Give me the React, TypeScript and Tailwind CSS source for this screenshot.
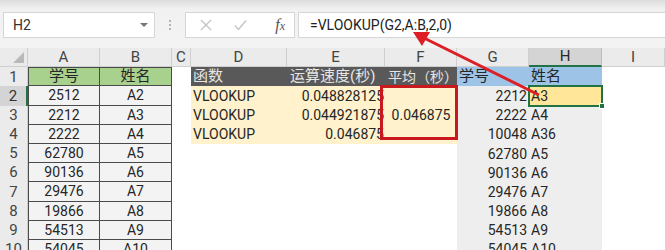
import React from "react";

const COLS = ["A", "B", "C", "D", "E", "F", "G", "H", "I"];

const LEFT = [
  ["学号", "姓名"],
  ["2512", "A2"],
  ["2212", "A3"],
  ["2222", "A4"],
  ["62780", "A5"],
  ["90136", "A6"],
  ["29476", "A7"],
  ["19866", "A8"],
  ["54513", "A9"],
  ["54045", "A10"],
];

const RIGHT = [
  ["学号", "姓名"],
  ["2212", "A3"],
  ["2222", "A4"],
  ["10048", "A36"],
  ["62780", "A5"],
  ["90136", "A6"],
  ["29476", "A7"],
  ["19866", "A8"],
  ["54513", "A9"],
  ["54045", "A10"],
];

const SPEED = [
  ["VLOOKUP", "0.048828125"],
  ["VLOOKUP", "0.044921875"],
  ["VLOOKUP", "0.046875"],
];

function FormulaBar() {
  return (
    <div className="bg-[linear-gradient(#dcdcdc,#f1f1f1_9px,#f3f3f3)] h-[48px] pt-[12px] pl-[3px] flex items-start">
      <div className="w-[152px] h-[26px] bg-white border border-[#d6d6d6] flex items-center justify-between pl-[9px] pr-[6px]">
        <span className="text-[14px] text-[#333]">H2</span>
        <span className="w-0 h-0 border-l-[4px] border-r-[4px] border-t-[4px] border-l-transparent border-r-transparent border-t-[#777]" />
      </div>
      <div className="w-[30px] h-[26px] flex flex-col items-center justify-center gap-[2px]">
        <span className="w-[2px] h-[2px] bg-[#b5b5b5]" />
        <span className="w-[2px] h-[2px] bg-[#b5b5b5]" />
        <span className="w-[2px] h-[2px] bg-[#b5b5b5]" />
      </div>
      <div className="w-[110px] h-[26px] bg-white border border-[#d6d6d6] flex items-center pl-[14px] pr-[9px]">
        <svg width="12" height="12" viewBox="0 0 12 12" className="mr-[22px]">
          <path d="M1 1 L11 11 M11 1 L1 11" stroke="#c4c4c4" strokeWidth="1.4" />
        </svg>
        <svg width="13" height="12" viewBox="0 0 13 12">
          <path d="M1 6.5 L4.5 10.5 L12 1.5" stroke="#c4c4c4" strokeWidth="1.4" fill="none" />
        </svg>
        <span className="ml-auto font-['Liberation_Serif',serif] italic text-[16px] text-[#555]">
          f<span className="text-[12px]">x</span>
        </span>
      </div>
      <div className="ml-[3px] flex-1 h-[26px] bg-white border border-[#d6d6d6] border-r-0 flex items-center pl-[11px]">
        <span className="text-[14px] text-[#222]">=VLOOKUP(G2,A:B,2,0)</span>
      </div>
    </div>
  );
}

function Sheet() {
  const cell = "flex items-center text-[14px] leading-none overflow-hidden whitespace-nowrap";
  const abBase = "border-r border-b border-[#4a4a4a] justify-center";
  return (
    <div className="grid grid-cols-[28px_72px_72px_19px_96px_98px_72px_72px_73px_1fr] auto-rows-[19.2px] bg-white">
      {/* column header row */}
      <div className="h-[19px] bg-[#ebebeb] border-r border-b border-[#cfcfcf] flex items-end justify-end pr-[3px] pb-[3px]">
        <svg width="11" height="11" viewBox="0 0 11 11">
          <polygon points="11,0 11,11 0,11" fill="#b9b9b9" />
        </svg>
      </div>
      {COLS.map((c) => (
        <div
          key={c}
          className={
            c === "H"
              ? "h-[19px] bg-[#d4d4d4] border-r border-[#bdbdbd] border-b-2 border-b-[#217346] flex items-center justify-center text-[15px] text-[#2a2a2a]"
              : "h-[19px] bg-[#ebebeb] border-r border-b border-[#cfcfcf] flex items-center justify-center text-[15px] text-[#444]"
          }
        >
          {c}
        </div>
      ))}

      {LEFT.map((row, i) => {
        const r = i + 1;
        const isHead = r === 1;
        const right = RIGHT[i];
        return (
          <React.Fragment key={r}>
            <div
              className={
                r === 2
                  ? "bg-[#d4d4d4] border-r-2 border-[#217346] flex items-center justify-center text-[15px] text-[#333]"
                  : "bg-[#ebebeb] border-r border-[#cfcfcf] flex items-center justify-center text-[15px] text-[#444]"
              }
            >
              {r}
            </div>
            <div
              className={`${cell} ${abBase} border-l ${isHead ? "bg-[#a9d18e] border-t text-[15px]" : "bg-[#f3f3f3]"} text-[#262626]`}
            >
              {row[0]}
            </div>
            <div className={`${cell} ${abBase} ${isHead ? "bg-[#a9d18e] border-t text-[15px]" : "bg-[#f3f3f3]"} text-[#262626]`}>
              {row[1]}
            </div>
            <div />
            {isHead && (
              <>
                <div className={`${cell} bg-[#595959] text-[#e6e6e6] text-[15px] pl-[2px]`}>函数</div>
                <div className={`${cell} bg-[#595959] text-[#e6e6e6] text-[15px] pl-[3px]`}>运算速度(秒)</div>
                <div className={`${cell} bg-[#595959] text-[#e6e6e6] text-[14px] pl-[3px]`}>平均（秒）</div>
              </>
            )}
            {r >= 2 && r <= 4 && (
              <>
                <div className={`${cell} bg-[#fff2cc] text-[#262626] pl-[2px]`}>{SPEED[r - 2][0]}</div>
                <div className={`${cell} bg-[#fff2cc] text-[#262626] justify-end pr-[1px]`}>{SPEED[r - 2][1]}</div>
                {r === 2 && (
                  <div className={`${cell} row-span-3 bg-[#fff2cc] text-[#262626] justify-center`}>0.046875</div>
                )}
              </>
            )}
            {r > 4 && (
              <>
                <div />
                <div />
                <div />
              </>
            )}
            <div
              className={`${cell} ${isHead ? "bg-[#9dc3e6] text-[15px] justify-start pl-[2px]" : "bg-[#eeeeee] justify-end pr-[2px]"} text-[#262626]`}
            >
              {right[0]}
            </div>
            <div
              className={`${cell} pl-[2px] ${isHead ? "bg-[#9dc3e6] text-[15px]" : r === 2 ? "bg-[#ffe699]" : "bg-[#eeeeee]"} text-[#262626]`}
            >
              {right[1]}
            </div>
            <div />
          </React.Fragment>
        );
      })}
    </div>
  );
}

export default function App() {
  return (
    <div className="relative w-[665px] h-[250px] overflow-hidden bg-white font-['Roboto','Noto_Sans_CJK_SC',sans-serif]">
      <FormulaBar />
      <Sheet />

      {/* selection on H2 */}
      <div className="absolute left-[528px] top-[85px] w-[75px] h-[22px] border-2 border-[#217346]">
        <span className="absolute -right-[4px] -bottom-[4px] w-[6px] h-[6px] bg-[#217346] border border-white" />
      </div>

      {/* red box around the merged average */}
      <div className="absolute left-[380px] top-[85px] w-[78px] h-[55px] border-[3px] border-[#c8191e]" />

      {/* arrow from H2 to the formula */}
      <svg className="absolute inset-0 pointer-events-none" width="665" height="250">
        <line x1="539" y1="95" x2="424" y2="38" stroke="#dd1e24" strokeWidth="3" />
        <polygon points="413,32 430,32 422,46" fill="#dd1e24" />
      </svg>
    </div>
  );
}
